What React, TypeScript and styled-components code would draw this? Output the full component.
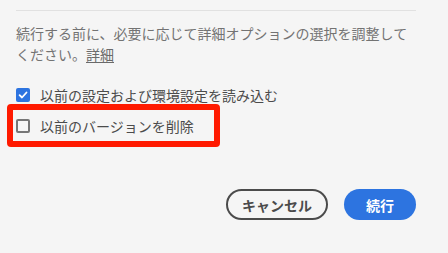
import React, {ReactElement} from 'react'
import styled, {createGlobalStyle} from 'styled-components'

const GlobalStyle = createGlobalStyle`
    html, body {
        margin: 0;
        padding: 0;
        background: #f5f5f5;
    }

    body {
        font-family: 'Noto Sans CJK JP', 'Noto Sans', sans-serif;
    }
`

const Page = styled.div`
    width: 448px;
    height: 253px;
    box-sizing: border-box;
    padding: 10px 32px 0 16px;
    background: #f5f5f5;
`

const Divider = styled.div`
    height: 1px;
    background: #e1e1e1;
`

const Intro = styled.p`
    margin: 12px 0 0;
    font-size: 14px;
    line-height: 21px;
    color: #737373;

    > a {
        color: #6a6a6a;
        text-decoration: underline;
        text-underline-offset: 2px;
    }
`

const Options = styled.div`
    margin-top: 14px;
    display: flex;
    flex-direction: column;
`

const Row = styled.label<{ $highlight?: boolean }>`
    position: relative;
    display: flex;
    align-items: center;
    gap: 10px;
    height: 31px;
    font-size: 14px;
    color: #4b4b4b;

    ${({$highlight}) => $highlight && `
        &::after {
            content: '';
            position: absolute;
            top: -6px;
            left: -9px;
            width: 213px;
            height: 43px;
            box-sizing: border-box;
            border: 6px solid #ff1a00;
            border-radius: 4px;
        }
    `}
`

const Box = styled.span<{ $checked?: boolean }>`
    width: 14px;
    height: 14px;
    box-sizing: border-box;
    border-radius: 2px;
    display: flex;
    align-items: center;
    justify-content: center;
    flex-shrink: 0;
    background: ${({$checked}) => $checked ? '#2d74e0' : 'transparent'};
    border: ${({$checked}) => $checked ? 'none' : '2px solid #767676'};
`

const Footer = styled.div`
    margin-top: 48px;
    display: flex;
    justify-content: flex-end;
    gap: 16px;
`

const Button = styled.button<{ $primary?: boolean }>`
    height: 31px;
    box-sizing: border-box;
    padding: 0;
    border-radius: 16px;
    font-family: 'Noto Sans CJK JP', sans-serif;
    font-size: 14px;
    font-weight: 700;
    width: ${({$primary}) => $primary ? '72px' : '102px'};
    background: ${({$primary}) => $primary ? '#2d74e0' : 'transparent'};
    color: ${({$primary}) => $primary ? '#ffffff' : '#4b4b4b'};
    border: ${({$primary}) => $primary ? 'none' : '2px solid #4b4b4b'};
`

function Checkbox(props: { checked?: boolean }): ReactElement {
    return (
        <Box $checked={props.checked}>
            {props.checked && (
                <svg width="10" height="10" viewBox="0 0 10 10">
                    <path d="M1.6 5.2 L4 7.5 L8.5 2.5" fill="none" stroke="#fff" strokeWidth="1.8"
                          strokeLinecap="round" strokeLinejoin="round"/>
                </svg>
            )}
        </Box>
    )
}

export default function App(): ReactElement {
    return (
        <Page>
            <GlobalStyle/>
            <Divider/>
            <Intro>
                続行する前に、必要に応じて詳細オプションの選択を調整してください。<a href="#">詳細</a>
            </Intro>
            <Options>
                <Row><Checkbox checked/>以前の設定および環境設定を読み込む</Row>
                <Row $highlight><Checkbox/>以前のバージョンを削除</Row>
            </Options>
            <Footer>
                <Button>キャンセル</Button>
                <Button $primary>続行</Button>
            </Footer>
        </Page>
    )
}
